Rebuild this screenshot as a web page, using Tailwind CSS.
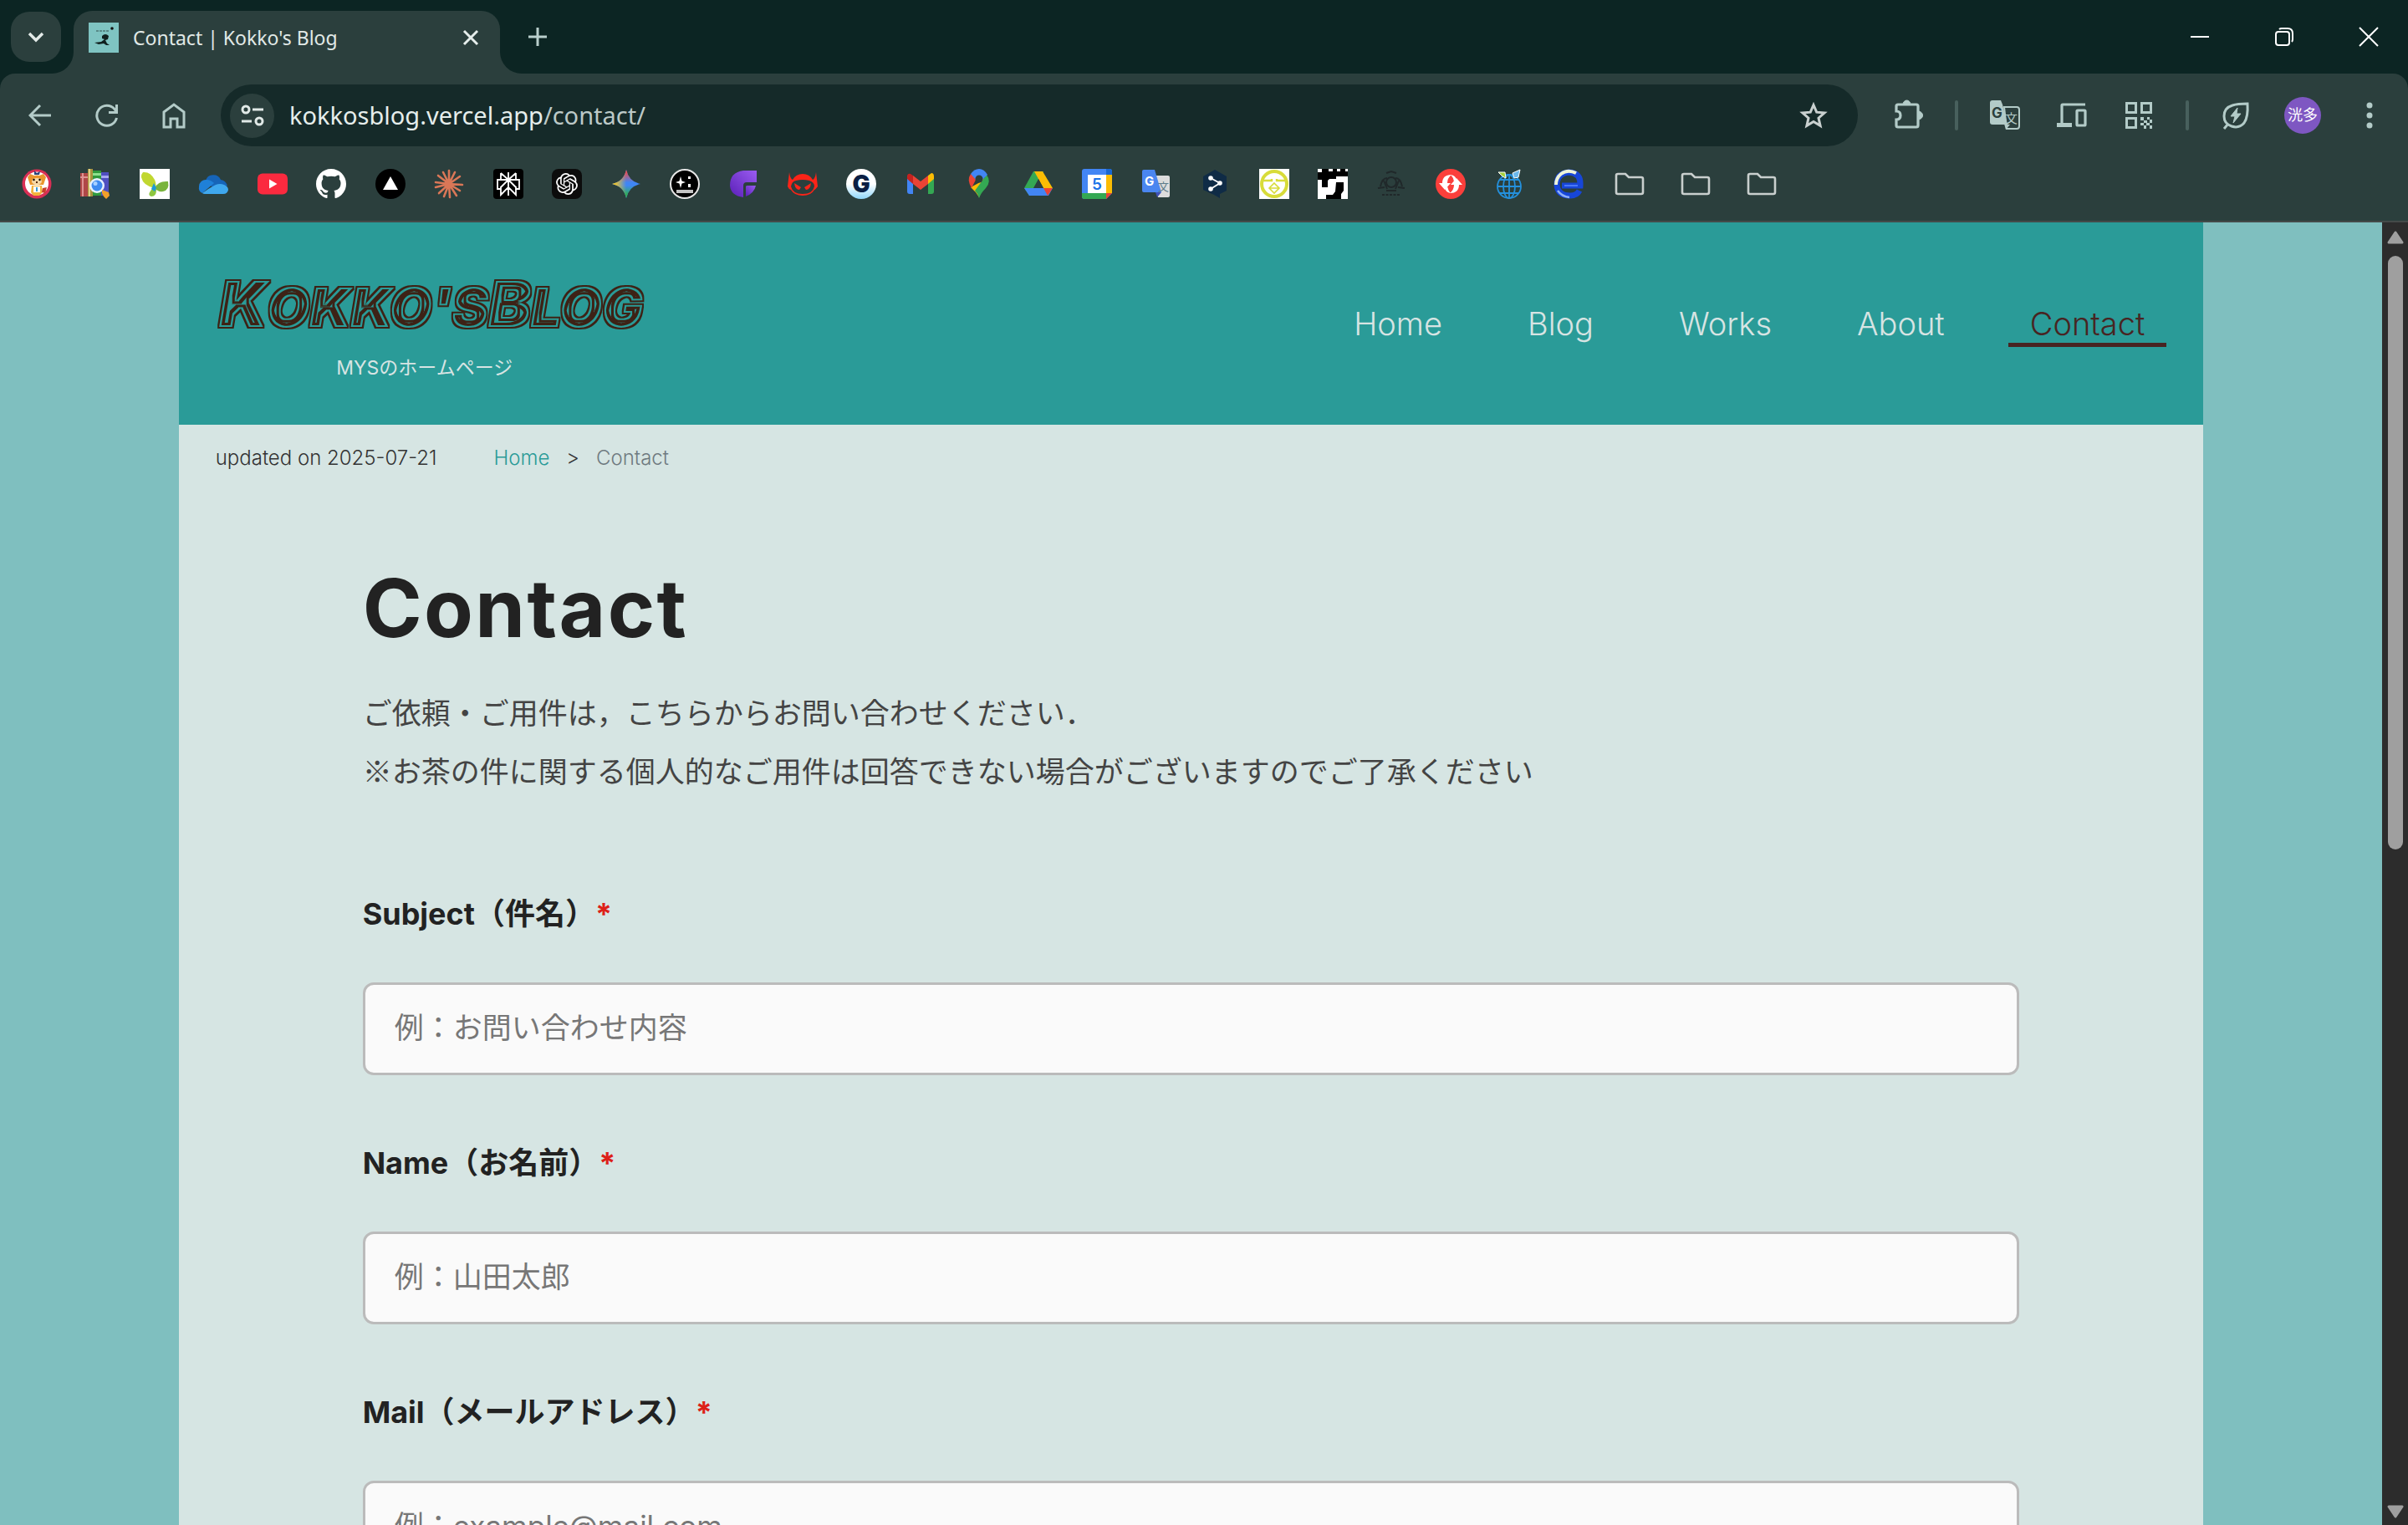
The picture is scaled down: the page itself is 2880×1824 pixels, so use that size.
<!DOCTYPE html>
<html lang="ja">
<head>
<meta charset="utf-8">
<meta name="viewport" content="width=device-width, initial-scale=1">
<title>Contact | Kokko's Blog</title>
<script src="https://cdn.jsdelivr.net/npm/@tailwindcss/browser@4"></script>
</head>
<body class="flex h-screen flex-col overflow-hidden bg-[#0c2523] font-['Inter','Noto_Sans_CJK_JP',sans-serif] text-[#222]">

<!-- Tab strip -->
<div class="flex h-[88px] shrink-0 items-start justify-between">
  <div class="flex items-start pl-[13px]">
    <button aria-label="Search tabs" class="mt-[14px] flex size-[60px] items-center justify-center rounded-[22px] bg-[#2b3f3d]">
      <svg class="size-6" viewBox="0 0 24 24" fill="none" stroke="#e3eae8" stroke-width="3.4"><path d="M4 8l8 8 8-8"/></svg>
    </button>
    <div class="relative mt-[13px] ml-[15px] flex h-[75px] w-[510px] items-center rounded-t-[22px] bg-[#2b3f3d] pr-[25px] pb-3 pl-[18px]">
      <svg class="absolute bottom-0 -left-[26px] size-[26px]" viewBox="0 0 26 26"><path d="M26 0v26H0A26 26 0 0026 0z" fill="#2b3f3d"/></svg>
      <svg class="absolute -right-[26px] bottom-0 size-[26px]" viewBox="0 0 26 26"><path d="M0 0v26h26A26 26 0 010 0z" fill="#2b3f3d"/></svg>
      <svg class="size-9 shrink-0" viewBox="0 0 36 36"><path fill="#7fc4c2" d="M0 0h36v36H0z"/><path d="M9 10h16" stroke="#4b7674" stroke-width="1.6" stroke-dasharray="3 1"/><circle cx="28" cy="7" r="1.8" fill="#111"/><path d="M16 16q4-4 8 0l-1 4-3 1 2 4 3 2h-4l-3-2-6 1-5-2 8-1 4-3-3-1z" fill="#10201f"/></svg>
      <span class="ml-[17px] flex-1 font-['Noto_Sans',sans-serif] text-[23px] leading-9 text-[#e1e9e7]">Contact | Kokko's Blog</span>
      <button aria-label="Close tab"><svg class="size-5" viewBox="0 0 20 20" stroke="#e6eeec" stroke-width="3"><path d="M2 2l16 16M18 2L2 18"/></svg></button>
    </div>
    <button aria-label="New tab" class="mt-[14px] ml-[15px] flex size-[60px] items-center justify-center">
      <svg class="size-6" viewBox="0 0 24 24" stroke="#b9cfcc" stroke-width="3"><path d="M12 1v22M1 12h22"/></svg>
    </button>
  </div>
  <div class="-mr-[3px] flex h-[88px] items-center">
    <button aria-label="Minimise" class="flex h-[88px] w-[101px] items-center justify-center"><svg class="size-6" viewBox="0 0 24 24" stroke="#fff" stroke-width="2"><path d="M1 12h22"/></svg></button>
    <button aria-label="Restore" class="flex h-[88px] w-[101px] items-center justify-center"><svg class="size-6" viewBox="0 0 24 24" fill="none" stroke="#fff" stroke-width="2"><rect x="2" y="6" width="16" height="16" rx="3"/><path d="M6 3q1-1 3-1h7q6 0 6 6v7q0 2-1 3"/></svg></button>
    <button aria-label="Close" class="flex h-[88px] w-[101px] items-center justify-center"><svg class="size-6" viewBox="0 0 24 24" stroke="#fff" stroke-width="2"><path d="M1 1l22 22M23 1L1 23"/></svg></button>
  </div>
</div>

<div class="shrink-0 rounded-t-[18px] border-b-2 border-[#444a49] bg-[#2b3f3d] pb-3">
  <!-- Toolbar -->
  <div class="flex h-[100px] items-center pr-[6px] pl-2">
    <button aria-label="Back" class="flex size-20 items-center justify-center"><svg class="size-7" viewBox="0 0 28 28" fill="none" stroke="#b3cbc8" stroke-width="3"><path d="M27 14H3M14 2L2 14l12 12"/></svg></button>
    <button aria-label="Reload" class="flex size-20 items-center justify-center"><svg class="size-7" viewBox="0 0 28 28" fill="none" stroke="#b3cbc8" stroke-width="3"><path d="M25.500 17A12 12 0 1123 6.500L25 9.500M25.500 1v9.500H16"/></svg></button>
    <button aria-label="Home" class="flex size-20 items-center justify-center"><svg class="size-8" viewBox="0 0 32 32" fill="none" stroke="#b3cbc8" stroke-width="3"><path d="M4 12L16 3l12 9v18h-8v-10h-8v10H4z"/></svg></button>
    <div class="mr-5 ml-4 flex h-[74px] flex-1 items-center rounded-full bg-[#152a29] pr-9 pl-[11px]">
      <button aria-label="View site information" class="flex size-[53px] shrink-0 items-center justify-center rounded-full bg-[#2b3f3d]">
        <svg class="size-7" viewBox="0 0 28 28" fill="none" stroke="#e1e9e7" stroke-width="3"><circle cx="6" cy="7" r="4"/><path d="M14 7h13M1 21h12"/><circle cx="22" cy="21" r="4"/></svg>
      </button>
      <div class="ml-[18px] flex-1 font-['Noto_Sans',sans-serif] text-[29px] leading-10 text-[#bcc9c7]"><span class="text-[#e6eeec]">kokkosblog.vercel.app</span>/contact/</div>
      <button aria-label="Bookmark this tab"><svg class="size-[34px]" viewBox="0 0 34 34" fill="none" stroke="#c9d0cf" stroke-width="3"><path d="M17 4.500l3.700 8.700 9.400.8-7.100 6.200 2.100 9.200-8.100-4.900-8.100 4.900L11 20.200 3.900 14l9.400-.8z"/></svg></button>
    </div>
    <button aria-label="Extensions" class="flex size-20 items-center justify-center"><svg class="size-10" viewBox="0 0 40 40"><path d="M6 9q0-2 2-2h22q2 0 2 2v23q0 2-2 2H8q-2 0-2-2v-7q5 0 5-5t-5-5z" fill="none" stroke="#b3cbc8" stroke-width="3.200"/><path d="M14 7a4.500 5 0 019 0zM32 15a5 4.500 0 010 10z" fill="#b3cbc8" stroke="#b3cbc8"/></svg></button>
    <div class="mx-4 h-9 w-1 rounded-full bg-[#48605d]"></div>
    <button aria-label="Translate" class="flex size-20 items-center justify-center"><svg class="size-9" viewBox="0 0 36 36"><path d="M17 8h15q3 0 3 3v20q0 3-3 3H20z" fill="none" stroke="#b3cbc8" stroke-width="2"/><path d="M3 0h10l2 5 6 24H3q-3 0-3-3V3q0-3 3-3z" fill="#b3cbc8"/><path d="M17 28l2 7 5-6z" fill="#b3cbc8"/><text x="2" y="21" font-family="Inter,sans-serif" font-weight="700" font-size="17" fill="#2b3f3d">G</text><text x="18" y="27" font-family="Noto Sans CJK JP,sans-serif" font-size="15" fill="#b3cbc8">文</text></svg></button>
    <button aria-label="Devices" class="flex size-20 items-center justify-center"><svg class="size-9" viewBox="0 0 36 36"><path d="M6 28V6q0-1 1-1h27" fill="none" stroke="#b3cbc8" stroke-width="3.200"/><path d="M0 27h18v5H0z" fill="#b3cbc8"/><rect x="24" y="12" width="10" height="18" rx="1" fill="none" stroke="#b3cbc8" stroke-width="3.200"/></svg></button>
    <button aria-label="QR code" class="flex size-20 items-center justify-center"><svg class="size-8" viewBox="0 0 32 32"><g fill="none" stroke="#b3cbc8" stroke-width="3"><path d="M1.500 1.500h11v11h-11zM19.500 1.500h11v11h-11zM1.500 19.500h11v11h-11z"/></g><path fill="#b3cbc8" d="M18 18h4v4h-4zM26 18h3v3h-3zM22 22h4v3h-4zM29 21h3v4h-3zM18 25h4v3h-4zM25 25h4v3h-4zM22 28h3v4h-3zM29 28h3v4h-3z"/></svg></button>
    <div class="mx-4 h-9 w-1 rounded-full bg-[#48605d]"></div>
    <button aria-label="Energy saver" class="flex size-20 items-center justify-center"><svg class="size-9" viewBox="0 0 36 36" fill="none" stroke="#b3cbc8" stroke-width="3"><path d="M32 4Q33 20 28 27 22 34 13 31 4 28 4 19 4 9 14 6 20 4 32 4zM9 28l-5 6"/><path d="M20 9l-8 10h5l-2 8 9-11h-5z" fill="#b3cbc8" stroke-width="1"/></svg></button>
    <button aria-label="Profile" class="flex size-20 items-center justify-center"><span class="flex size-11 items-center justify-center rounded-full bg-[#7e57c2] text-lg leading-none text-white">洸多</span></button>
    <button aria-label="Menu" class="flex size-20 items-center justify-center"><svg class="size-9" viewBox="0 0 36 36" fill="#b3cbc8"><circle cx="18" cy="6" r="3.500"/><circle cx="18" cy="18" r="3.500"/><circle cx="18" cy="30" r="3.500"/></svg></button>
  </div>

  <!-- Bookmarks bar -->
  <div class="flex h-16 items-center pl-[26px]">
    <div class="flex w-[1868px] items-center justify-between">
      <a href="#" aria-label="Mascot"><svg class="size-9" viewBox="0 0 36 36"><circle cx="18" cy="18" r="17.500" fill="#d92f55"/><circle cx="18" cy="17.500" r="14" fill="#fff"/><path d="M7 10l3-4 5 2q4-1 6 0l5-2 3 4-3 9H10z" fill="#e9962e"/><path d="M15 2l3 3 4-2-1 4h-6z" fill="#27447c"/><ellipse cx="18" cy="15" rx="6" ry="4" fill="#f6d9a7"/><circle cx="14.500" cy="13" r="1.200"/><circle cx="21.500" cy="13" r="1.200"/><path d="M17 15h2v2h-2z" fill="#5b2d10"/><path d="M12 20h12l1 8-4 4h-7l-3-4z" fill="#f2b33d"/><path d="M14 21h8v7h-8z" fill="#fff"/><path d="M17 22h2v5h-2z" fill="#3a9ad4"/><path d="M25 23l5-1-2 7-4-1z" fill="#c7402b"/></svg></a>
      <a href="#" aria-label="Library"><svg class="size-9" viewBox="0 0 36 36"><path d="M0 5h9v28H0z" fill="#b04848"/><path d="M0 9h9v2H0zM2 5h2v28H2z" fill="#de9292"/><path d="M9 0h6v33H9z" fill="#a89340"/><path d="M10 0h2v33h-2z" fill="#e0d188"/><path d="M15 2h10v30H15z" fill="#2f9a3e"/><path d="M15 5h10v3H15z" fill="#8de08f"/><path d="M25 4h9v28h-9z" fill="#4f4fc0"/><path d="M25 8h9v3h-9z" fill="#a7a7f2"/><circle cx="20" cy="20" r="9" fill="#e8f2ff"/><circle cx="20" cy="20" r="6.500" fill="#3e8af0"/><circle cx="18" cy="17.500" r="2.500" fill="#a8d0ff"/><path d="M26 25l8 3 1 4-4 4-3-3-2-4z" fill="#f2a02a"/></svg></a>
      <a href="#" aria-label="Leaf"><svg class="size-9" viewBox="0 0 36 36"><path fill="#fff" d="M0 0h36v36H0z"/><path d="M4 4q9-1 14 9 3 7 0 10Q4 20 2 10q0-4 2-6z" fill="#c1d730"/><path d="M34 15q2 10-6 12-6 1-10-4 4-9 16-8z" fill="#79b43c"/><path d="M18 19l2 6q0 8-6 8-4-1-2-5z" fill="#8cc63f"/><path d="M17 17l3 6-2 4-4-3z" fill="#1e9ad6"/></svg></a>
      <a href="#" aria-label="OneDrive"><svg class="size-9" viewBox="0 0 36 36"><path d="M9 14a9.500 9 0 0118-1q6 1 8 7l-15 5z" fill="#1664b8"/><path d="M1 21a8 8 0 019-8q5 0 9 4L5 29Q0 27 1 21z" fill="#1f80d8"/><path d="M5 29q8-6 16-10 5-2 10 0 5 2 5 6-1 5-6 5H8q-2 0-3-1z" fill="#3fa8ee"/></svg></a>
      <a href="#" aria-label="YouTube"><svg class="size-9" viewBox="0 0 36 36"><rect y="5.500" width="36" height="25" rx="6" fill="#fb2a3f"/><path d="M14 12.500l9.500 5.500-9.500 5.500z" fill="#fff"/></svg></a>
      <a href="#" aria-label="GitHub"><svg class="size-9" viewBox="0 0 16 16" fill="#fff"><path d="M8 0C3.580 0 0 3.580 0 8c0 3.540 2.290 6.530 5.470 7.590.4.070.55-.17.55-.38 0-.19-.01-.82-.01-1.490-2.010.37-2.530-.49-2.690-.94-.09-.23-.48-.94-.82-1.130-.28-.15-.68-.52-.01-.53.63-.01 1.080.58 1.230.82.72 1.210 1.870.87 2.330.66.07-.52.28-.87.51-1.070-1.780-.2-3.640-.89-3.640-3.950 0-.87.31-1.590.82-2.150-.08-.2-.36-1.020.08-2.120 0 0 .67-.21 2.200.82.64-.18 1.320-.27 2-.27s1.360.09 2 .27c1.530-1.040 2.200-.82 2.200-.82.44 1.100.16 1.920.08 2.120.51.56.82 1.270.82 2.150 0 3.070-1.870 3.750-3.650 3.950.29.25.54.73.54 1.480 0 1.070-.01 1.930-.01 2.200 0 .21.15.46.55.38A8.010 8.010 0 0016 8c0-4.420-3.580-8-8-8z"/></svg></a>
      <a href="#" aria-label="Vercel"><svg class="size-9" viewBox="0 0 36 36"><circle cx="18" cy="18" r="18"/><path d="M18 9l9 16H9z" fill="#fff"/></svg></a>
      <a href="#" aria-label="Claude"><svg class="size-9" viewBox="0 0 36 36" stroke="#d97757" stroke-width="2.600" stroke-linecap="round"><path d="M18 18V2M18 18l7-14M18 18l13-9M18 18l16 1M18 18l13 8M18 18l9 14M18 18l1 16M18 18l-6 15M18 18L6 29M18 18L2 22M18 18L2 16M18 18L5 8M18 18L11 4"/></svg></a>
      <a href="#" aria-label="Perplexity"><svg class="size-9" viewBox="0 0 36 36"><rect width="36" height="36" rx="4"/><path d="M18 4v28M9 5l9 8v9L9 31V21M27 5l-9 8v9l9 9V21M9 5v8h18V5M9 24H5V13h26v11h-4M18 13l-9 9M18 13l9 9" fill="none" stroke="#fff" stroke-width="1.800"/></svg></a>
      <a href="#" aria-label="ChatGPT"><svg class="size-9" viewBox="0 0 36 36"><rect width="36" height="36" rx="8" fill="#0c0c0c"/><g transform="translate(5 5) scale(1.080)"><path fill="#fff" d="M22.282 9.821a5.985 5.985 0 0 0-.516-4.910 6.046 6.046 0 0 0-6.510-2.900A6.065 6.065 0 0 0 4.981 4.182a5.985 5.985 0 0 0-3.998 2.900 6.046 6.046 0 0 0 .743 7.097 5.980 5.980 0 0 0 .510 4.911 6.051 6.051 0 0 0 6.515 2.900A5.985 5.985 0 0 0 13.260 24a6.056 6.056 0 0 0 5.772-4.206 5.990 5.990 0 0 0 3.997-2.900 6.056 6.056 0 0 0-.747-7.073zM13.260 22.430a4.476 4.476 0 0 1-2.876-1.040l.141-.081 4.779-2.758a.795.795 0 0 0 .392-.681v-6.737l2.020 1.169a.071.071 0 0 1 .038.052v5.583a4.504 4.504 0 0 1-4.494 4.493zM3.600 18.304a4.470 4.470 0 0 1-.535-3.014l.142.085 4.783 2.759a.771.771 0 0 0 .781 0l5.843-3.369v2.332a.080.080 0 0 1-.033.062L9.740 19.950a4.500 4.500 0 0 1-6.141-1.646zM2.340 7.896a4.485 4.485 0 0 1 2.366-1.973V11.600a.766.766 0 0 0 .388.677l5.815 3.355-2.020 1.169a.076.076 0 0 1-.071 0l-4.830-2.787A4.504 4.504 0 0 1 2.340 7.872zm16.597 3.855l-5.833-3.387L15.119 7.200a.076.076 0 0 1 .071 0l4.830 2.791a4.494 4.494 0 0 1-.676 8.105v-5.678a.790.790 0 0 0-.407-.667zm2.010-3.023l-.141-.085-4.774-2.782a.776.776 0 0 0-.785 0L9.409 9.230V6.897a.066.066 0 0 1 .028-.061l4.830-2.787a4.500 4.500 0 0 1 6.680 4.660zM8.307 12.863l-2.020-1.164a.080.080 0 0 1-.038-.057V6.075a4.500 4.500 0 0 1 7.375-3.453l-.142.080L8.704 5.460a.795.795 0 0 0-.393.681zm1.097-2.366l2.602-1.500 2.607 1.500v3l-2.597 1.500-2.607-1.500z"/></g></svg></a>
      <a href="#" aria-label="Gemini"><svg class="size-9" viewBox="0 0 36 36"><defs><clipPath id="spark"><path d="M18 1Q21 15 35 18 21 21 18 35 15 21 1 18 15 15 18 1z"/></clipPath><linearGradient id="gr" x1="0" y1="0" x2="0" y2="1"><stop offset=".1" stop-color="#f04a4a"/><stop offset=".45" stop-color="#f04a4a" stop-opacity="0"/></linearGradient><linearGradient id="gg" x1="0" y1="1" x2="0" y2="0"><stop offset=".15" stop-color="#2fae55"/><stop offset=".45" stop-color="#2fae55" stop-opacity="0"/></linearGradient><linearGradient id="gy"><stop offset=".1" stop-color="#fbc81c"/><stop offset=".5" stop-color="#fbc81c" stop-opacity="0"/></linearGradient></defs><g clip-path="url(#spark)"><path fill="#3f86f5" d="M0 0h36v36H0z"/><path fill="url(#gg)" d="M0 0h36v36H0z"/><path fill="url(#gr)" d="M0 0h36v36H0z"/><path fill="url(#gy)" d="M0 0h36v36H0z"/></g></svg></a>
      <a href="#" aria-label="Pixel face"><svg class="size-9" viewBox="0 0 36 36"><circle cx="18" cy="18" r="17" stroke="#e6e6e6" stroke-width="2"/><path d="M13 9l1.500 5.500L19 16l-4.500 1.500L13 23l-1.500-5.500L7 16l4.500-1.500zM22 9h3v3h-3zM22 18h3v4h-3z" fill="#fff"/><path d="M8 25h20v4H8z" fill="#c4c4c4"/></svg></a>
      <a href="#" aria-label="Felo"><svg class="size-9" viewBox="0 0 36 36"><defs><linearGradient id="pu" x1="1" y1="0" x2="0" y2="1"><stop offset="0" stop-color="#9a5cf0"/><stop offset="1" stop-color="#5a1fb8"/></linearGradient></defs><path d="M18 2h16v14H22q-4 0-4 4v14Q3 32 2 20 2 4 18 2z" fill="url(#pu)"/><path d="M22 20h11q-2 9-12 13V21z" fill="url(#pu)"/></svg></a>
      <a href="#" aria-label="Devil"><svg class="size-9" viewBox="0 0 36 36"><path d="M2 4q1 8 4 9 4-7 12-7t12 7q3-1 4-9l2 17q-3 4-4 4-4 7-14 7T4 25q-3-1-4-4z" fill="#fb2418"/><path d="M4 21q1-6 6-7 8-2 16 0 6 2 6 7-2 9-14 9T4 21z" fill="#2b3f3d"/><path d="M8 17l8 5-2 3q-5 0-6-8zM28 17l-8 5 2 3q5 0 6-8z" fill="#fb2418"/></svg></a>
      <a href="#" aria-label="G"><svg class="size-9" viewBox="0 0 36 36"><defs><linearGradient id="gb" x2="0" y2="1"><stop offset=".5" stop-color="#fff"/><stop offset="1" stop-color="#8fd6fa"/></linearGradient></defs><circle cx="18" cy="18" r="18" fill="url(#gb)"/><text x="18" y="28" text-anchor="middle" font-family="Inter,sans-serif" font-weight="900" font-size="28" fill="#0a1f44">G</text></svg></a>
      <a href="#" aria-label="Gmail"><svg class="size-9" viewBox="0 0 36 36"><path d="M2 9v18q0 3 3 3h4V14z" fill="#4285f4"/><path d="M34 9v18q0 3-3 3h-4V14z" fill="#34a853"/><path d="M27 8l4-3q3 0 3 4v3l-7 6z" fill="#fbbc04"/><path d="M2 12V8q1-3 4-2l3 2v10z" fill="#c5221f"/><path d="M9 8l9 7 9-7v10l-9 7-9-7z" fill="#ea4335"/></svg></a>
      <a href="#" aria-label="Google Maps"><svg class="size-9" viewBox="0 0 36 36"><path d="M8 22l11-6q4-4 3-7l5 8q-4 5-9 17-4-7-10-12z" fill="#fbbc04"/><path d="M8 6l7 5-6 12q-6-10-1-17z" fill="#ea4335"/><path d="M18 35q-1-5-5-9l14-19q6 8-1 16-6 6-8 12z" fill="#34a853"/><path d="M8 6q4-6 10-6 6 0 10 7l-6 6H14z" fill="#4285f4"/><circle cx="18" cy="12" r="4.500" fill="#2b3f3d"/></svg></a>
      <a href="#" aria-label="Google Drive"><svg class="size-9" viewBox="0 0 36 36"><path d="M12 3h12L7 32 1 23z" fill="#34a853"/><path d="M13 3h10l12 20H24z" fill="#fbbc04"/><path d="M1 23h34l-5 9H7z" fill="#4285f4"/><path d="M24 23h11l-6 9z" fill="#ea4335"/><path d="M18 12l6 11H12z" fill="#2b3f3d"/></svg></a>
      <a href="#" aria-label="Google Calendar"><svg class="size-9" viewBox="0 0 36 36"><path d="M3 0h30q3 0 3 3v26l-7 7H3q-3 0-3-3V3q0-3 3-3z" fill="#4285f4"/><path d="M29 0h4q3 0 3 3v4h-7z" fill="#1967d2"/><path d="M29 7h7v22h-7z" fill="#fbbc04"/><path d="M0 29h29v7H3q-3 0-3-3z" fill="#34a853"/><path d="M29 29h7l-7 7z" fill="#ea4335"/><path d="M7 7h22v22H7z" fill="#fff"/><text x="18" y="25" text-anchor="middle" font-family="Inter,sans-serif" font-weight="600" font-size="19" fill="#1a73e8">5</text></svg></a>
      <a href="#" aria-label="Google Translate"><svg class="size-9" viewBox="0 0 36 36"><path d="M14 8h18q2 0 2 2v22q0 2-2 2H20z" fill="#dcdcdc"/><path d="M17 28h7l-5 6z" fill="#3f51b5"/><path d="M3 1h13l8 27H3q-2 0-2-2V3q0-2 2-2z" fill="#4a86f0"/><text x="4" y="20" font-family="Inter,sans-serif" font-weight="700" font-size="15" fill="#fff">G</text><text x="20" y="26" font-family="Noto Sans CJK JP,sans-serif" font-size="13" fill="#607d8b">文</text></svg></a>
      <a href="#" aria-label="DeepL"><svg class="size-9" viewBox="0 0 36 36"><path d="M18 1l14 8v17l-8 4v5l-7-4L4 25V9z" fill="#0f2b46"/><path d="M13 11l11 6-11 7" fill="none" stroke="#fff" stroke-width="1.800"/><circle cx="13" cy="11" r="2.800" fill="#fff"/><circle cx="24" cy="17" r="2.800" fill="#fff"/><circle cx="13" cy="24" r="2.800" fill="#fff"/></svg></a>
      <a href="#" aria-label="Yellow face"><svg class="size-9" viewBox="0 0 36 36" fill="none" stroke="#d8dc3a"><path fill="#fff" stroke="none" d="M0 0h36v36H0z"/><circle cx="18" cy="18" r="15" stroke-width="4"/><path d="M5 14h10v-2M31 14H21v-2" stroke-width="2.400"/><path d="M18 17l6 6-6 6-6-6zM12 23h12" stroke-width="1.600"/></svg></a>
      <a href="#" aria-label="Monochrome blocks"><svg class="size-9" viewBox="0 0 36 36"><path fill="#fff" d="M0 0h36v36H0z"/><path d="M5 0h8v3h5V0h5v3h4V0h6v3h3v6H22v3h-8l-2 2v8H5v-9H0V4h5zM22 16h9v10l-3 4v6H10v-5h8l3-4z"/></svg></a>
      <a href="#" aria-label="Crest"><svg class="size-9" viewBox="0 0 36 36" fill="none" stroke="#20282a" stroke-width="2"><circle cx="18" cy="16" r="6"/><path d="M12 5l6-2 6 2M5 21q2-10 8-10M31 21q-2-10-8-10M2 23l8-1M34 23l-8-1M9 14l4 10M27 14l-4 10M12 26h12"/><path d="M7 31h22" stroke-dasharray="3 1.500"/></svg></a>
      <a href="#" aria-label="Sync"><svg class="size-9" viewBox="0 0 36 36"><circle cx="18" cy="18" r="18" fill="#fb3f3b"/><path d="M19 7Q8 7 8 17H4l7 8 7-8h-4q0-6 5-10z" fill="#fff"/><path d="M17 29q11 0 11-10h4l-7-8-7 8h4q0 6-5 10z" fill="#fff"/><path d="M18 7q6 1 7 6l-3 2q-1-5-4-8zM18 29q-6-1-7-6l3-2q1 5 4 8z" fill="#fff"/></svg></a>
      <a href="#" aria-label="Globe"><svg class="size-9" viewBox="0 0 36 36" fill="none" stroke="#2490dc" stroke-width="1.800"><circle cx="18" cy="21" r="14"/><ellipse cx="18" cy="21" rx="7" ry="14"/><path d="M18 7v28M4 21h28M7 13h22M7 29h22"/><path d="M5 4l8 0 1 7-4-2z" fill="#a6cf3b" stroke="#fff" stroke-width="1"/><path d="M22 5l9-4-2 9-5 1z" fill="#6cb8ec" stroke="#fff" stroke-width="1"/></svg></a>
      <a href="#" aria-label="E"><svg class="size-9" viewBox="0 0 36 36" fill="none"><path d="M10 20h22q1-15-13-16Q4 5 4 19q1 13 16 13 8 0 11-6" stroke="#1746d8" stroke-width="7"/><path d="M27 5Q17 0 9 6 3 11 3 19" stroke="#eef3d8" stroke-width="4"/><path d="M5 26q5 7 14 8" stroke="#8fb0f8" stroke-width="2.500"/><path d="M13 20h16" stroke="#4a78f8" stroke-width="2"/></svg></a>
    </div>
    <div class="ml-[37px] flex gap-[43px]">
      <a href="#" aria-label="Folder 1"><svg class="size-9" viewBox="0 0 36 36" fill="none" stroke="#c9cfce" stroke-width="2.600"><path d="M2 8q0-2 2-2h9l4 4h15q2 0 2 2v16q0 2-2 2H4q-2 0-2-2z"/></svg></a>
      <a href="#" aria-label="Folder 2"><svg class="size-9" viewBox="0 0 36 36" fill="none" stroke="#c9cfce" stroke-width="2.600"><path d="M2 8q0-2 2-2h9l4 4h15q2 0 2 2v16q0 2-2 2H4q-2 0-2-2z"/></svg></a>
      <a href="#" aria-label="Folder 3"><svg class="size-9" viewBox="0 0 36 36" fill="none" stroke="#c9cfce" stroke-width="2.600"><path d="M2 8q0-2 2-2h9l4 4h15q2 0 2 2v16q0 2-2 2H4q-2 0-2-2z"/></svg></a>
    </div>
  </div>
</div>

<!-- Page viewport -->
<div class="flex min-h-0 flex-1">
  <div class="min-w-0 flex-1 overflow-hidden bg-[#7fbfbf]">
    <div class="mx-auto min-h-full w-[85%] bg-[#d6e5e3]">
      <header class="flex items-center justify-between bg-[#2a9b98] px-11 text-[#d7e4e3]">
        <div class="flex flex-col items-center pt-16 pb-[52px]">
          <a href="#"><svg class="h-[68px] w-[512px] overflow-visible" viewBox="0 0 512 68">
            <defs><filter id="stripes" x="-2%" y="-20%" width="104%" height="140%">
              <feMorphology in="SourceGraphic" operator="dilate" radius="2" result="a"/>
              <feMorphology in="SourceGraphic" operator="erode" radius="2" result="c"/>
              <feMorphology in="SourceGraphic" operator="erode" radius="5" result="d"/>
              <feComposite in="a" in2="SourceGraphic" operator="out" result="outer"/>
              <feComposite in="c" in2="d" operator="out" result="inner"/>
              <feMerge><feMergeNode in="outer"/><feMergeNode in="inner"/></feMerge>
            </filter></defs>
            <text x="4" y="61" font-family="Inter,sans-serif" font-weight="900" font-style="italic" fill="#3c2415" filter="url(#stripes)"><tspan font-size="76">K</tspan><tspan font-size="65">OKKO'S</tspan><tspan font-size="76">B</tspan><tspan font-size="65">LOG</tspan></text>
          </svg></a>
          <p class="mt-[26px] pr-3 text-[23px] leading-8">MYSのホームページ</p>
        </div>
        <nav class="flex gap-[50px] text-[38px] leading-[46px] font-light">
          <a href="#" class="border-y-[5px] border-transparent px-[26px]">Home</a>
          <a href="#" class="border-y-[5px] border-transparent px-[26px]">Blog</a>
          <a href="#" class="border-y-[5px] border-transparent px-[26px]">Works</a>
          <a href="#" class="border-y-[5px] border-transparent px-[26px]">About</a>
          <a href="#" class="border-y-[5px] border-t-transparent border-b-[#482422] px-[26px] text-[#482422]">Contact</a>
        </nav>
      </header>

      <div class="flex h-20 items-center pl-11 text-[24px] leading-8 font-light">
        <span class="text-[#333]">updated on 2025-07-21</span>
        <ol class="ml-[68px] flex items-center">
          <li><a href="#" class="text-[#2a9b98]">Home</a></li>
          <li class="mx-[20px] text-[#333]" aria-hidden="true">&gt;</li>
          <li class="text-[#6f7a80]">Contact</li>
        </ol>
      </div>

      <main class="px-[220px]">
        <h1 class="mt-[91px] text-8xl leading-none font-bold tracking-wide">Contact</h1>
        <p class="mt-[41px] font-['Noto_Sans_CJK_JP',sans-serif] text-[35px] leading-[70px] text-[#444]">ご依頼・ご用件は，こちらからお問い合わせください．<br>※お茶の件に関する個人的なご用件は回答できない場合がございますのでご了承ください</p>
        <form class="mt-[113px] flex flex-col gap-[81px]">
          <div class="flex flex-col gap-[58px]">
            <label for="subject" class="text-[36px] leading-[48px] font-bold">Subject（件名）<span class="text-[#dd2018]">*</span></label>
            <input id="subject" type="text" placeholder="例：お問い合わせ内容" class="h-[111px] w-full rounded-[13px] border-3 border-[#bbb] bg-[#fafafa] px-[35px] pb-1 text-[35px] placeholder:text-[#777]">
          </div>
          <div class="flex flex-col gap-[58px]">
            <label for="name" class="text-[36px] leading-[48px] font-bold">Name（お名前）<span class="text-[#dd2018]">*</span></label>
            <input id="name" type="text" placeholder="例：山田太郎" class="h-[111px] w-full rounded-[13px] border-3 border-[#bbb] bg-[#fafafa] px-[35px] pb-1 text-[35px] placeholder:text-[#777]">
          </div>
          <div class="flex flex-col gap-[58px]">
            <label for="mail" class="text-[36px] leading-[48px] font-bold">Mail（メールアドレス）<span class="text-[#dd2018]">*</span></label>
            <input id="mail" type="email" placeholder="例：example@mail.com" class="h-[111px] w-full rounded-[13px] border-3 border-[#bbb] bg-[#fafafa] px-[35px] pb-1 text-[35px] placeholder:text-[#777]">
          </div>
        </form>
      </main>
    </div>
  </div>

  <!-- Scrollbar -->
  <div class="flex w-[31px] shrink-0 flex-col items-center bg-[#2c2c2c] pt-[10px] pb-[8px]">
    <svg class="h-4 w-5" viewBox="0 0 20 16"><path d="M10 2l8 12H2z" fill="#9f9f9f" stroke="#9f9f9f" stroke-width="3" stroke-linejoin="round"/></svg>
    <div class="mt-[14px] flex w-full flex-1 justify-center"><div class="h-[47.5%] w-[18px] rounded-full bg-[#9f9f9f]"></div></div>
    <svg class="h-4 w-5" viewBox="0 0 20 16"><path d="M10 14l8-12H2z" fill="#9f9f9f" stroke="#9f9f9f" stroke-width="3" stroke-linejoin="round"/></svg>
  </div>
</div>
</body>
</html>
